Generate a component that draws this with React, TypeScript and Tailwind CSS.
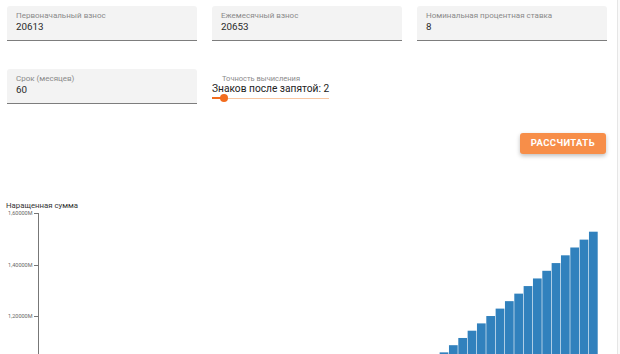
const initial = 20613;
const monthly = 20653;
const rate = 0.08 / 12;
const months = 60;

function grown(n: number) {
  const k = Math.pow(1 + rate, n);
  return initial * k + (monthly * (k - 1)) / rate;
}

const values = Array.from({ length: months }, (_, i) => grown(i + 1));
const last = values[months - 1];

// chart geometry (svg starts 211px from the page top)
const top0 = 211;
const pxPerUnit = 257.5 / 1e6;
const barW = 560 / months;
const chartH = 143;

const ticks = [
  { label: "1,60000M", y: 213 },
  { label: "1,40000M", y: 265 },
  { label: "1,20000M", y: 316 },
];

function Field({ label, value }: { label: string; value: string }) {
  return (
    <div className="flex h-[35px] flex-col rounded-t-[3px] border-b border-[#7d7d7d] bg-[#f3f3f3] pl-[9px] pt-[5px]">
      <span className="text-[8px] leading-[10px] text-[#8a8a8a]">{label}</span>
      <span className="text-[9.8px] leading-[12px] text-[#2a2a2a]">{value}</span>
    </div>
  );
}

function Precision() {
  return (
    <div className="flex flex-col">
      <span className="mt-[6px] pl-[10px] text-[7.5px] leading-[8px] text-[#8a8a8a]">
        Точность вычисления
      </span>
      <span className="text-[10.2px] leading-[11px] text-[#222]">Знаков после запятой: 2</span>
      <div className="relative h-[8px] w-[117px]">
        <div className="absolute left-0 right-0 top-[3.5px] h-[1px] bg-[#f8c7a3]" />
        <div className="absolute left-0 top-[3px] h-[2px] w-[12px] bg-[#f26c1e]" />
        <div className="absolute left-[8px] top-0 h-[8px] w-[8px] rounded-full bg-[#f26c1e]" />
      </div>
    </div>
  );
}

export default function App() {
  return (
    <div className="flex h-[354px] w-[620px] overflow-hidden bg-white font-['Roboto',sans-serif]">
      <div className="flex w-[617px] flex-col">
        <div className="grid grid-cols-[190px_190px_190px] gap-x-[15px] gap-y-[28px] pl-[7px] pt-[6px]">
          <Field label="Первоначальный взнос" value="20613" />
          <Field label="Ежемесячный взнос" value="20653" />
          <Field label="Номинальная процентная ставка" value="8" />
          <Field label="Срок (месяцев)" value="60" />
          <Precision />
        </div>

        <div className="mt-[29px] flex justify-end pr-[11px]">
          <button className="h-[21px] rounded-[3px] bg-[#f78e49] px-[11px] text-[9.5px] font-bold tracking-[0.4px] text-white shadow-[0_2px_4px_rgba(0,0,0,0.25)]">
            РАССЧИТАТЬ
          </button>
        </div>

        <div className="mt-[46px] pl-[6px] text-[7.8px] leading-[11px] text-[#333]">
          Наращенная сумма
        </div>

        <svg width={617} height={chartH} className="block">
          {values.map((v, i) => {
            const y = 231.7 + (last - v) * pxPerUnit - top0;
            return (
              <rect
                key={i}
                x={38 + i * barW + 0.3}
                y={y}
                width={barW - 0.6}
                height={Math.max(0, chartH - y)}
                fill="#3181bd"
              />
            );
          })}
          <line x1={38.5} y1={2} x2={38.5} y2={chartH} stroke="#777" strokeWidth={1} />
          {ticks.map((t) => (
            <g key={t.label}>
              <line x1={34} y1={t.y - top0 + 0.5} x2={38} y2={t.y - top0 + 0.5} stroke="#777" />
              <text
                x={32.5}
                y={t.y - top0 + 2}
                textAnchor="end"
                fontSize={5.5}
                fill="#666"
                fontFamily="Roboto, sans-serif"
              >
                {t.label}
              </text>
            </g>
          ))}
        </svg>
      </div>
      <div className="w-[3px] border-l border-[#e6e6e6] bg-[#fafafa]" />
    </div>
  );
}
